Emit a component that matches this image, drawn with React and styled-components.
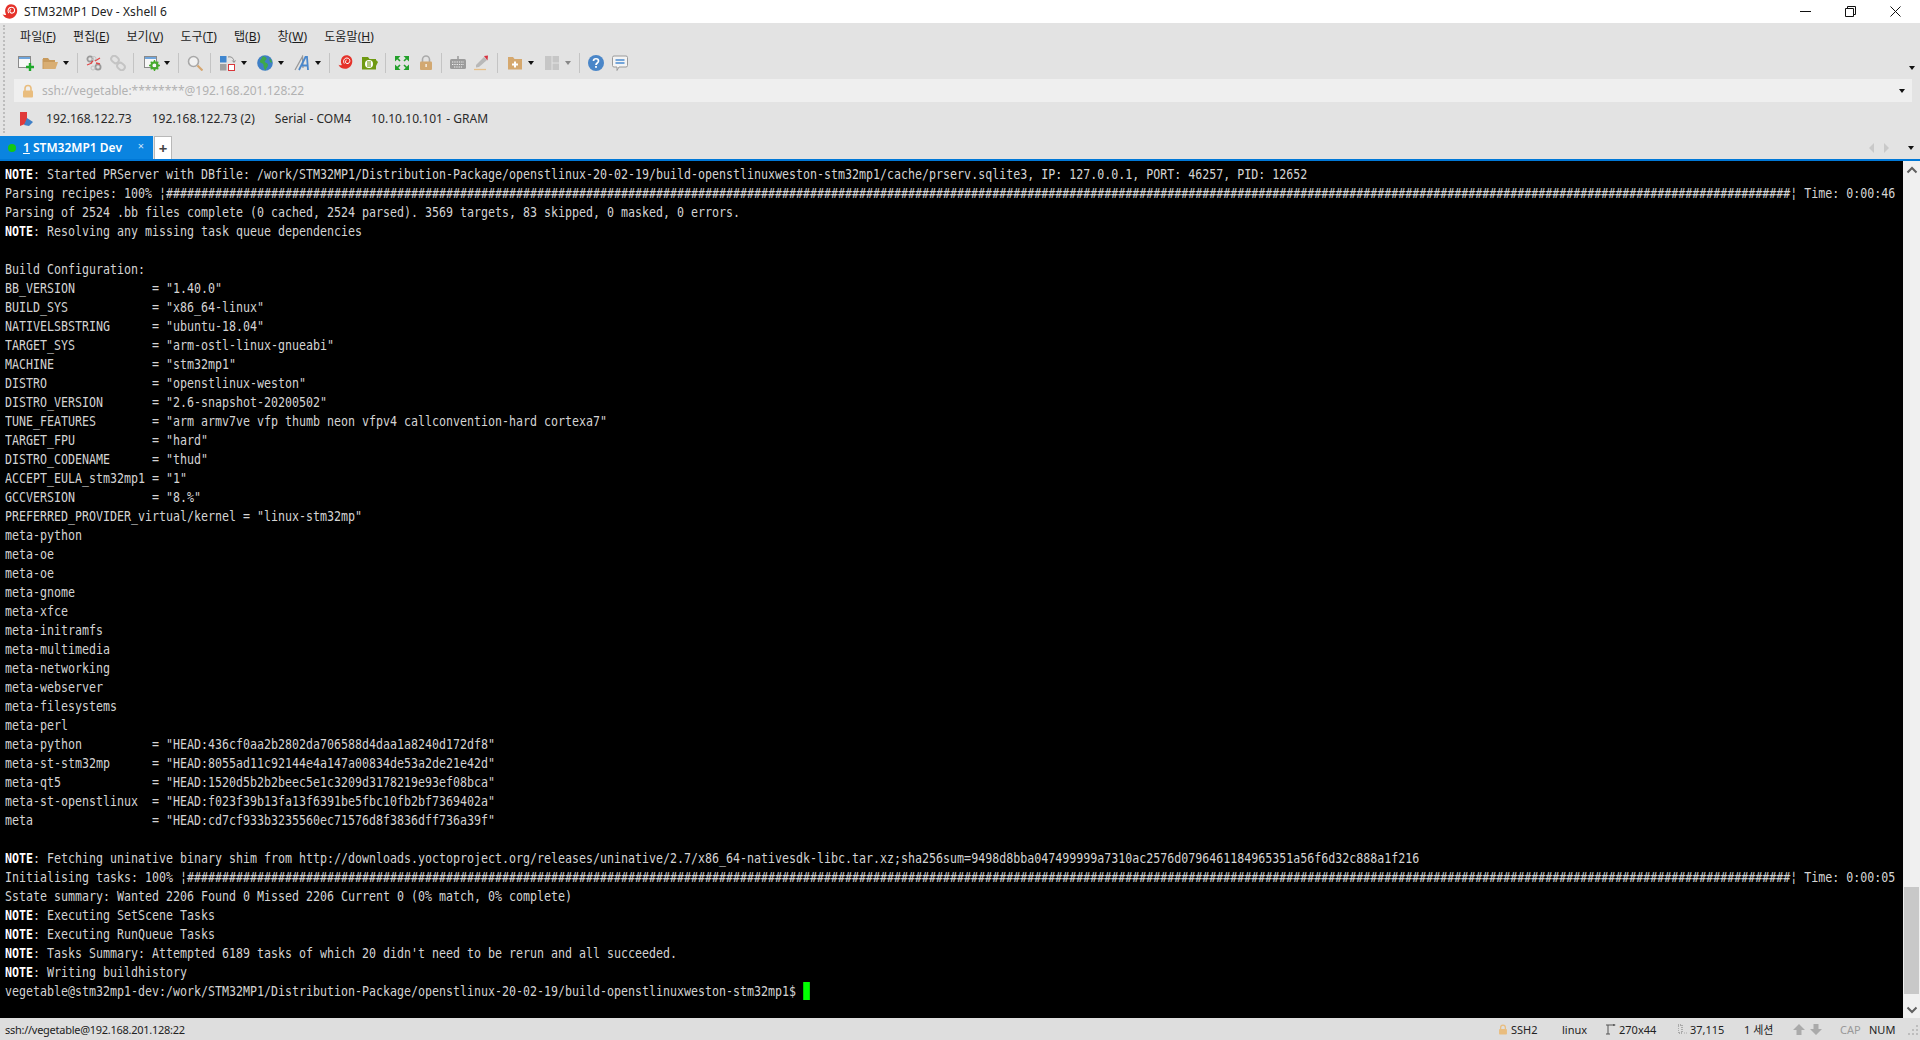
import React from 'react';
import styled, { createGlobalStyle } from 'styled-components';

const Global = createGlobalStyle`
  html, body { margin: 0; padding: 0; height: 100%; overflow: hidden; background: #e3e3e3; }
  #root { height: 100%; }
`;

const UI = `"Noto Sans", "Noto Sans CJK KR", sans-serif`;

const Window = styled.div`
  width: 1920px; height: 1040px; display: flex; flex-direction: column;
  font-family: ${UI}; background: #e3e3e3; overflow: hidden;
`;
const TitleBar = styled.div`
  height: 23px; background: #fff; display: flex; align-items: center; padding-left: 2px;
  font-size: 12px; color: #222;
`;
const TitleText = styled.span` margin-left: 6px; letter-spacing: 0.1px; `;
const WinButtons = styled.div` margin-left: auto; display: flex; align-items: center; padding-right: 2px; `;
const WinButton = styled.div`
  width: 45px; height: 23px; display: flex; align-items: center; justify-content: center;
`;
const Chrome = styled.div`
  position: relative; display: flex; flex-direction: column;
  &::before {
    content: ''; position: absolute; left: 3px; top: 2px; height: 108px;
    border-left: 2px dotted #bdbdbd;
  }
`;
const MenuBar = styled.div`
  height: 26px; display: flex; align-items: center; padding-left: 20px; gap: 17px;
  font-size: 12px; color: #1c1c1c; letter-spacing: 0.1px;
`;
const MenuItem = styled.span`
  u { text-underline-offset: 1px; }
`;
const ToolBar = styled.div`
  height: 27px; display: flex; align-items: center; padding-left: 18px; position: relative;
`;
const Tool = styled.div`
  width: ${p => p.$w}px; height: 20px; flex: none; display: flex; align-items: center;
`;
const Sep = styled.div` width: 1px; height: 20px; background: #c4c4c4; `;
const Caret = styled.div`
  width: 0; height: 0; border-left: 3.5px solid transparent; border-right: 3.5px solid transparent;
  border-top: 4px solid ${p => p.$c || '#111'};
`;
const ToolCaret = styled(Caret)` margin-left: -3px; `;
const EdgeCaret = styled(Caret)` position: absolute; right: 5px; top: 17px; `;
const AddressBar = styled.div`
  height: 23px; margin: 3px 8px 0 14px; background: #efefef; display: flex; align-items: center;
  padding: 0 7px 0 8px; font-size: 12px; color: #b2b2b2;
`;
const AddressText = styled.span` margin-left: 8px; `;
const AddressCaret = styled(Caret)` margin-left: auto; `;
const LinksBar = styled.div`
  height: 34px; display: flex; align-items: center; padding: 0 0 1px 20px; font-size: 12px; color: #2a2a2a;
  letter-spacing: 0.04px; box-sizing: border-box;
`;
const LinkItem = styled.span` margin-right: 20px; `;
const LinkIcon = styled.svg` margin-right: 13px; `;
const TabStrip = styled.div`
  box-sizing: border-box; height: 25px; display: flex; align-items: stretch;
  border-bottom: 2px solid #0078d7;
`;
const ActiveTab = styled.div`
  box-sizing: border-box; width: 153px; background: #0a84e0; color: #fff; display: flex; align-items: center;
  font-size: 12px; font-weight: 600; position: relative; padding-left: 8px;
  u { text-underline-offset: 1px; }
`;
const Dot = styled.span` width: 8px; height: 8px; border-radius: 50%; background: #14c814; margin-right: 7px; `;
const TabClose = styled.span`
  position: absolute; right: 9px; top: 2px; font-size: 11px; font-weight: 400; color: #cfe6fa;
`;
const AddTab = styled.div`
  box-sizing: border-box; width: 18px; margin-left: 1px; background: #fff; border: 1px solid #b8b8b8;
  border-bottom: none; display: flex; align-items: center; justify-content: center;
  font-size: 15px; font-weight: 700; color: #444; line-height: 1;
`;
const TabNav = styled.div`
  margin-left: auto; display: flex; align-items: center; padding-right: 6px; gap: 10px;
`;
const Tri = styled.div`
  width: 0; height: 0; border-top: 5px solid transparent; border-bottom: 5px solid transparent;
  ${p => p.$left ? 'border-right: 5px solid #c9c9c9;' : 'border-left: 5px solid #c9c9c9;'}
`;
const TabCaret = styled(Caret)` margin-left: 9px; `;
const Main = styled.div` flex: 1; min-height: 0; display: flex; `;
const Terminal = styled.div`
  flex: 1; background: #000; padding: 4px 0 0 4px; overflow: hidden; min-width: 0;
`;
const Lines = styled.div`
  width: 120%; transform: scaleX(0.8306); transform-origin: left top; margin-left: 1px;
  font-family: "DejaVu Sans Mono", monospace; font-size: 14px; line-height: 19px; color: #d4d4d4;
`;
const Line = styled.div` height: 19px; white-space: pre; `;
const Note = styled.b` color: #fff; font-weight: 700; `;
const Cursor = styled.span`
  display: inline-block; width: 8px; height: 18px; background: #00ff00; vertical-align: top;
`;
const ScrollBar = styled.div`
  width: 17px; background: #f0f0f0; display: flex; flex-direction: column; align-items: center;
`;
const ScrollArrow = styled.div` height: 17px; display: flex; align-items: center; justify-content: center; flex: none; `;
const ScrollTrack = styled.div` flex: 1; width: 100%; display: flex; flex-direction: column; justify-content: flex-end; padding: 0 1px; box-sizing: border-box; `;
const ScrollThumb = styled.div` height: 107px; background: #c8c8c8; margin-bottom: 7px; `;
const StatusBar = styled.div`
  height: 22px; background: #dedede; display: flex; align-items: center; padding-left: 5px;
  font-size: 11px; color: #222; flex: none; position: relative;
`;
const StatusPath = styled.span` letter-spacing: -0.27px; `;
const StatusCells = styled.div` position: absolute; right: 0; top: 0; bottom: 0; display: flex; align-items: center; `;
const Cell = styled.div`
  width: ${p => p.$w}px; flex: none; display: flex; align-items: center; gap: 3px; white-space: nowrap;
  color: ${p => p.$c || '#222'};
`;
const Grip = styled.svg` margin-right: 1px; `;

const I = ({ children, w = 16, h = 16, vb }) => (
  <svg width={w} height={h} viewBox={vb || `0 0 ${w} ${h}`}>{children}</svg>
);

const Shell = ({ w = 16, h = 18 }) => (
  <svg width={w} height={h} viewBox="0 0 15 17">
    <path d="M8.500 1.200c3.400 0 5.800 2.600 5.800 6 0 4.300-3.300 7.600-7.300 7.600-3 0-5.400-1.500-6.500-4.100 1.200.7 2.400.8 3.400.4C1.600 7.200 3.600 1.200 8.500 1.200z" fill="#e5322a" />
    <path d="M6.300 9.600c-1.700-2.300-.2-5.600 2.600-5.600 2.100 0 3.400 1.900 2.800 3.800-.5 1.700-2.700 2.400-3.900 1.100-.9-1-.4-2.600.8-2.800" fill="none" stroke="#fff" strokeWidth="1" />
  </svg>
);
const Lock = ({ c = '#e9bd7e', s = '#e9bd7e', w = 12, h = 14 }) => (
  <svg width={w} height={h} viewBox="0 0 12 14">
    <path d="M3 7V4.500a3 3 0 0 1 6 0V7" fill="none" stroke={s} strokeWidth="1.600" />
    <rect x="1" y="6.500" width="10" height="7" rx="1" fill={c} />
  </svg>
);
const NewSession = () => (
  <I><rect x=".5" y="1.500" width="12" height="11" fill="#f7f7f7" stroke="#8a8a8a" /><rect x="1" y="2" width="11" height="2" fill="#6fa5dc" />
    <path d="M12 8v8M8 12h8" stroke="#1fa82b" strokeWidth="2.400" /></I>
);
const Folder = ({ c = '#d9ae73', d = '#c89a5c' }) => (
  <I><path d="M1 3h5l1.500 2H13v2H1z" fill={d} /><path d="M1 14V7h15l-2.500 7z" fill={c} /><path d="M1 4v10" stroke={d} /></I>
);
const Disconnect = () => (
  <I><circle cx="4" cy="4" r="2.600" fill="none" stroke="#9a9a9a" strokeWidth="1.800" /><circle cx="12" cy="12" r="2.600" fill="none" stroke="#9a9a9a" strokeWidth="1.800" />
    <circle cx="8" cy="3.500" r="2" fill="none" stroke="#c4c4c4" /><circle cx="7" cy="13" r="2" fill="none" stroke="#c4c4c4" />
    <path d="M9 6l5-3M1 10l5-2M10 8l4 1M7 6l-2 2" stroke="#e04848" strokeWidth="1.300" /></I>
);
const LinkChain = () => (
  <I><rect x="1" y="1.500" width="8" height="6" rx="3" transform="rotate(40 5 4.500)" fill="none" stroke="#c4c4c4" strokeWidth="2" />
    <rect x="7" y="8.500" width="8" height="6" rx="3" transform="rotate(40 11 11.500)" fill="none" stroke="#c4c4c4" strokeWidth="2" /></I>
);
const Settings = () => (
  <I><rect x=".5" y="1.500" width="12" height="11" fill="#f7f7f7" stroke="#8a8a8a" /><rect x="1" y="2" width="11" height="2" fill="#6fa5dc" />
    <circle cx="10.500" cy="10.500" r="3.200" fill="none" stroke="#46ab2b" strokeWidth="2.200" />
    <path d="M10.500 5v2M10.500 14v2M5 10.500h2M14 10.500h2M6.700 6.700l1.400 1.400M12.900 12.900l1.400 1.400M14.300 6.700l-1.400 1.400M8.100 12.900l-1.400 1.400" stroke="#46ab2b" strokeWidth="1.400" /></I>
);
const Search = () => (
  <I><circle cx="6.500" cy="6.500" r="5" fill="#f1f1f1" stroke="#a8a8a8" strokeWidth="1.600" /><path d="M10.500 10.500l5 5" stroke="#d5a670" strokeWidth="2.200" /></I>
);
const Transfer = () => (
  <I><rect x="0" y="1" width="6.500" height="6.500" fill="#3f86cf" /><rect x="0" y="9" width="6.500" height="6.500" fill="#a0a0a0" />
    <rect x="8.500" y="9.500" width="6" height="6" fill="#fff" stroke="#d9363a" />
    <path d="M8 2c3-.8 6 1 6 5M12.300 5.500L14 7.500l1.500-2" fill="none" stroke="#8a8a8a" /></I>
);
const Globe = () => (
  <I><circle cx="8" cy="8" r="7.800" fill="#3f7fc6" />
    <path d="M6 1c1.500 1 3 1 3.500 2.500S7 5.500 8 7s3 1 3 3-2 3-2.500 5.500C7 14 6.500 12 6.500 10S3.500 8.500 3 7 5 3 6 1zM12.500 3c1 1.500 2.500 2.500 2.500 4.500-1 .5-2-.5-2.500-1.500z" fill="#3ea84a" /></I>
);
const FontIcon = () => (
  <I><path d="M1 15L8.500 1.500 9 13" fill="none" stroke="#9a9a9a" strokeWidth="1.300" />
    <path d="M5 15L11.500 2H13l1 13M7.500 10.500h6.500" fill="none" stroke="#4a87cc" strokeWidth="1.800" /></I>
);
const Xftp = () => (
  <I><path d="M0 2h6l1.500 2H14v10.500H0z" fill="#6f9a12" /><path d="M14 5l2 2-2 4z" fill="#6f9a12" />
    <circle cx="7" cy="9" r="4" fill="#fff" /><path d="M6 6v6M8 6v6" stroke="#6f9a12" strokeWidth="1.100" /></I>
);
const Fullscreen = () => (
  <I w={14} h={14}><g fill="#22a02a"><path d="M0 0h5.500L0 5.500z" /><path d="M14 0H8.500L14 5.500z" /><path d="M0 14h5.500L0 8.500z" /><path d="M14 14H8.500L14 8.500z" /></g>
    <path d="M2 2l3 3M12 2L9 5M2 12l3-3M12 12L9 9" stroke="#22a02a" strokeWidth="1.600" /></I>
);
const ToolLock = () => (
  <svg width="12" height="15" viewBox="0 0 12 15">
    <path d="M2.500 7V4.500a3.500 3.500 0 0 1 7 0V7" fill="none" stroke="#aaa" strokeWidth="1.600" />
    <rect x="0" y="6.500" width="12" height="8.500" rx="1" fill="#d2a871" /><rect x="5.500" y="9" width="1.200" height="3" fill="#fff" />
  </svg>
);
const Keyboard = () => (
  <I><path d="M8 1v3" stroke="#888" strokeWidth="1.200" /><rect x="0" y="4" width="16" height="10" rx="1.500" fill="#9b9b9b" />
    <path d="M2 7h12M2 9.500h12M4 12h8" stroke="#f0f0f0" strokeWidth="1.100" strokeDasharray="1.300 1" /></I>
);
const Pen = () => (
  <I w={14} h={16}><path d="M2 10L10 2l3 3-8 7-3 .5z" fill="#b8b8b8" /><path d="M10 1l4-.5-.5 5z" fill="#d63340" /><path d="M0 14.500h12" stroke="#e7bf88" strokeWidth="1.300" /></I>
);
const NewFolder = () => (
  <I w={14} h={14}><path d="M0 1h5l1.500 2H14v10.500H0z" fill="#d5a86e" /><path d="M7 5.500v6M4 8.500h6" stroke="#fff" strokeWidth="2" /></I>
);
const Layout = () => (
  <I w={14} h={14}><rect width="14" height="14" fill="#c6c6c6" /><path d="M7 0v14M7 7h7" stroke="#e3e3e3" strokeWidth="1" /></I>
);
const Help = () => (
  <svg width="16" height="16" viewBox="0 0 16 16"><circle cx="8" cy="8" r="8" fill="#4a86c8" />
    <path d="M5.500 6c0-3 5-3 5 0 0 2-2.500 2-2.500 4" fill="none" stroke="#fff" strokeWidth="1.700" /><rect x="7.100" y="11" width="1.800" height="1.800" fill="#fff" /></svg>
);
const Chat = () => (
  <I><path d="M2 1h12a1.500 1.500 0 0 1 1.500 1.500v8A1.500 1.500 0 0 1 14 12H7l-2 3.500V12H2A1.500 1.500 0 0 1 .5 10.500v-8A1.500 1.500 0 0 1 2 1z" fill="#f4f4f4" stroke="#9a9a9a" />
    <path d="M3.500 5h9M3.500 8h9" stroke="#4a8ad0" strokeWidth="1.700" /></I>
);

const tools = [
  ['t', 24, <NewSession />], ['t', 24, <Folder />], ['c', 11], ['s', 9],
  ['t', 24, <Disconnect />], ['t', 23, <LinkChain />], ['s', 11],
  ['t', 23, <Settings />], ['c', 11], ['s', 9],
  ['t', 23, <Search />], ['s', 10],
  ['t', 24, <Transfer />], ['c', 13],
  ['t', 24, <Globe />], ['c', 13],
  ['t', 24, <FontIcon />], ['c', 11], ['s', 9],
  ['t', 24, <Shell w={15} h={17} />], ['t', 23, <Xftp />], ['s', 10],
  ['t', 25, <Fullscreen />], ['t', 21, <ToolLock />], ['s', 9],
  ['t', 24, <Keyboard />], ['t', 23, <Pen />],
  ['s', 11],
  ['t', 23, <NewFolder />], ['c', 14],
  ['t', 23, <Layout />], ['c', 11, '#888'], ['s', 9],
  ['t', 24, <Help />], ['t', 24, <Chat />],
];

const menus = [['파일', 'F'], ['편집', 'E'], ['보기', 'V'], ['도구', 'T'], ['탭', 'B'], ['창', 'W'], ['도움말', 'H']];
const links = ['192.168.122.73', '192.168.122.73 (2)', 'Serial - COM4', '10.10.10.101 - GRAM'];

const cfg = (k, v) => `${k.padEnd(21)}= "${v}"`;
const N = t => ({ note: t });
const lines = [
  N(': Started PRServer with DBfile: /work/STM32MP1/Distribution-Package/openstlinux-20-02-19/build-openstlinuxweston-stm32mp1/cache/prserv.sqlite3, IP: 127.0.0.1, PORT: 46257, PID: 12652'),
  `Parsing recipes: 100% ¦${'#'.repeat(232)}¦ Time: 0:00:46`,
  'Parsing of 2524 .bb files complete (0 cached, 2524 parsed). 3569 targets, 83 skipped, 0 masked, 0 errors.',
  N(': Resolving any missing task queue dependencies'),
  '',
  'Build Configuration:',
  cfg('BB_VERSION', '1.40.0'),
  cfg('BUILD_SYS', 'x86_64-linux'),
  cfg('NATIVELSBSTRING', 'ubuntu-18.04'),
  cfg('TARGET_SYS', 'arm-ostl-linux-gnueabi'),
  cfg('MACHINE', 'stm32mp1'),
  cfg('DISTRO', 'openstlinux-weston'),
  cfg('DISTRO_VERSION', '2.6-snapshot-20200502'),
  cfg('TUNE_FEATURES', 'arm armv7ve vfp thumb neon vfpv4 callconvention-hard cortexa7'),
  cfg('TARGET_FPU', 'hard'),
  cfg('DISTRO_CODENAME', 'thud'),
  cfg('ACCEPT_EULA_stm32mp1', '1'),
  cfg('GCCVERSION', '8.%'),
  'PREFERRED_PROVIDER_virtual/kernel = "linux-stm32mp"',
  'meta-python', 'meta-oe', 'meta-oe', 'meta-gnome', 'meta-xfce', 'meta-initramfs', 'meta-multimedia',
  'meta-networking', 'meta-webserver', 'meta-filesystems', 'meta-perl',
  cfg('meta-python', 'HEAD:436cf0aa2b2802da706588d4daa1a8240d172df8'),
  cfg('meta-st-stm32mp', 'HEAD:8055ad11c92144e4a147a00834de53a2de21e42d'),
  cfg('meta-qt5', 'HEAD:1520d5b2b2beec5e1c3209d3178219e93ef08bca'),
  cfg('meta-st-openstlinux', 'HEAD:f023f39b13fa13f6391be5fbc10fb2bf7369402a'),
  cfg('meta', 'HEAD:cd7cf933b3235560ec71576d8f3836dff736a39f'),
  '',
  N(': Fetching uninative binary shim from http://downloads.yoctoproject.org/releases/uninative/2.7/x86_64-nativesdk-libc.tar.xz;sha256sum=9498d8bba047499999a7310ac2576d0796461184965351a56f6d32c888a1f216'),
  `Initialising tasks: 100% ¦${'#'.repeat(229)}¦ Time: 0:00:05`,
  'Sstate summary: Wanted 2206 Found 0 Missed 2206 Current 0 (0% match, 0% complete)',
  N(': Executing SetScene Tasks'),
  N(': Executing RunQueue Tasks'),
  N(": Tasks Summary: Attempted 6189 tasks of which 20 didn't need to be rerun and all succeeded."),
  N(': Writing buildhistory'),
];

export default function App() {
  return (
    <Window>
      <Global />
      <TitleBar>
        <Shell />
        <TitleText>STM32MP1 Dev - Xshell 6</TitleText>
        <WinButtons>
          <WinButton><svg width="11" height="11" viewBox="0 0 11 11"><path d="M0 5.500h11" stroke="#111" /></svg></WinButton>
          <WinButton><svg width="11" height="11" viewBox="0 0 11 11"><path d="M.5 2.500h8v8h-8zM2.500 2.500v-2h8v8h-2" fill="none" stroke="#111" /></svg></WinButton>
          <WinButton><svg width="11" height="11" viewBox="0 0 11 11"><path d="M.5.500l10 10M10.500.500l-10 10" stroke="#111" /></svg></WinButton>
        </WinButtons>
      </TitleBar>
      <Chrome>
        <MenuBar>
          {menus.map(([k, a]) => <MenuItem key={a}>{k}(<u>{a}</u>)</MenuItem>)}
        </MenuBar>
        <ToolBar>
          {tools.map(([kind, w, el], i) => (
            <Tool key={i} $w={w}>
              {kind === 't' ? el : kind === 'c' ? <ToolCaret $c={el} /> : <Sep />}
            </Tool>
          ))}
          <EdgeCaret />
        </ToolBar>
        <AddressBar>
          <Lock />
          <AddressText>ssh://vegetable:********@192.168.201.128:22</AddressText>
          <AddressCaret />
        </AddressBar>
        <LinksBar>
          <LinkIcon width="13" height="14" viewBox="0 0 13 14">
            <path d="M0 0h7v8l-2 4-5 2z" fill="#e03a3a" /><path d="M4 13l3-7 6 4-4 4z" fill="#3f7fc6" />
          </LinkIcon>
          {links.map(l => <LinkItem key={l}>{l}</LinkItem>)}
        </LinksBar>
        <TabStrip>
          <ActiveTab>
            <Dot /><span><u>1</u> STM32MP1 Dev</span>
            <TabClose>×</TabClose>
          </ActiveTab>
          <AddTab>+</AddTab>
          <TabNav>
            <Tri $left /><Tri />
            <TabCaret />
          </TabNav>
        </TabStrip>
      </Chrome>
      <Main>
        <Terminal>
          <Lines>
            {lines.map((l, i) => (
              <Line key={i}>{typeof l === 'string' ? l : <><Note>NOTE</Note>{l.note}</>}</Line>
            ))}
            <Line>vegetable@stm32mp1-dev:/work/STM32MP1/Distribution-Package/openstlinux-20-02-19/build-openstlinuxweston-stm32mp1$ <Cursor /></Line>
          </Lines>
        </Terminal>
        <ScrollBar>
          <ScrollArrow><svg width="12" height="8" viewBox="0 0 12 8"><path d="M1.500 6.500L6 2l4.500 4.500" fill="none" stroke="#606060" strokeWidth="2" /></svg></ScrollArrow>
          <ScrollTrack><ScrollThumb /></ScrollTrack>
          <ScrollArrow><svg width="12" height="8" viewBox="0 0 12 8"><path d="M1.500 1.500L6 6l4.500-4.500" fill="none" stroke="#606060" strokeWidth="2" /></svg></ScrollArrow>
        </ScrollBar>
      </Main>
      <StatusBar>
        <StatusPath>ssh://vegetable@192.168.201.128:22</StatusPath>
        <StatusCells>
          <Cell $w={64}><Lock w={10} h={11} />SSH2</Cell>
          <Cell $w={44}>linux</Cell>
          <Cell $w={72}>
            <svg width="10" height="11" viewBox="0 0 10 11"><path d="M2 1v9M0 1h9M0 10h4" stroke="#555" fill="none" /><path d="M7 0l3 1-3 1z" fill="#555" /></svg>
            270x44
          </Cell>
          <Cell $w={66}>
            <svg width="9" height="11" viewBox="0 0 9 11"><path d="M0 1h4v8H0zM6 9h.5M8 9h.5" stroke="#777" fill="none" strokeDasharray="1 1" /></svg>
            37,115
          </Cell>
          <Cell $w={49}>1 세션</Cell>
          <Cell $w={47}>
            <svg width="29" height="11" viewBox="0 0 29 11"><path d="M6 0l6 6H8.500v5h-5V6H0zM23 11l6-6h-3.500V0h-5v5H17z" fill="#aaa" /></svg>
          </Cell>
          <Cell $w={29} $c="#999">CAP</Cell>
          <Cell $w={38}>NUM</Cell>
          <Grip width="12" height="12" viewBox="0 0 12 12">
            <path d="M9 2h2v2H9zM5 6h2v2H5zM9 6h2v2H9zM1 10h2v2H1zM5 10h2v2H5zM9 10h2v2H9z" fill="#bdbdbd" />
          </Grip>
        </StatusCells>
      </StatusBar>
    </Window>
  );
}
